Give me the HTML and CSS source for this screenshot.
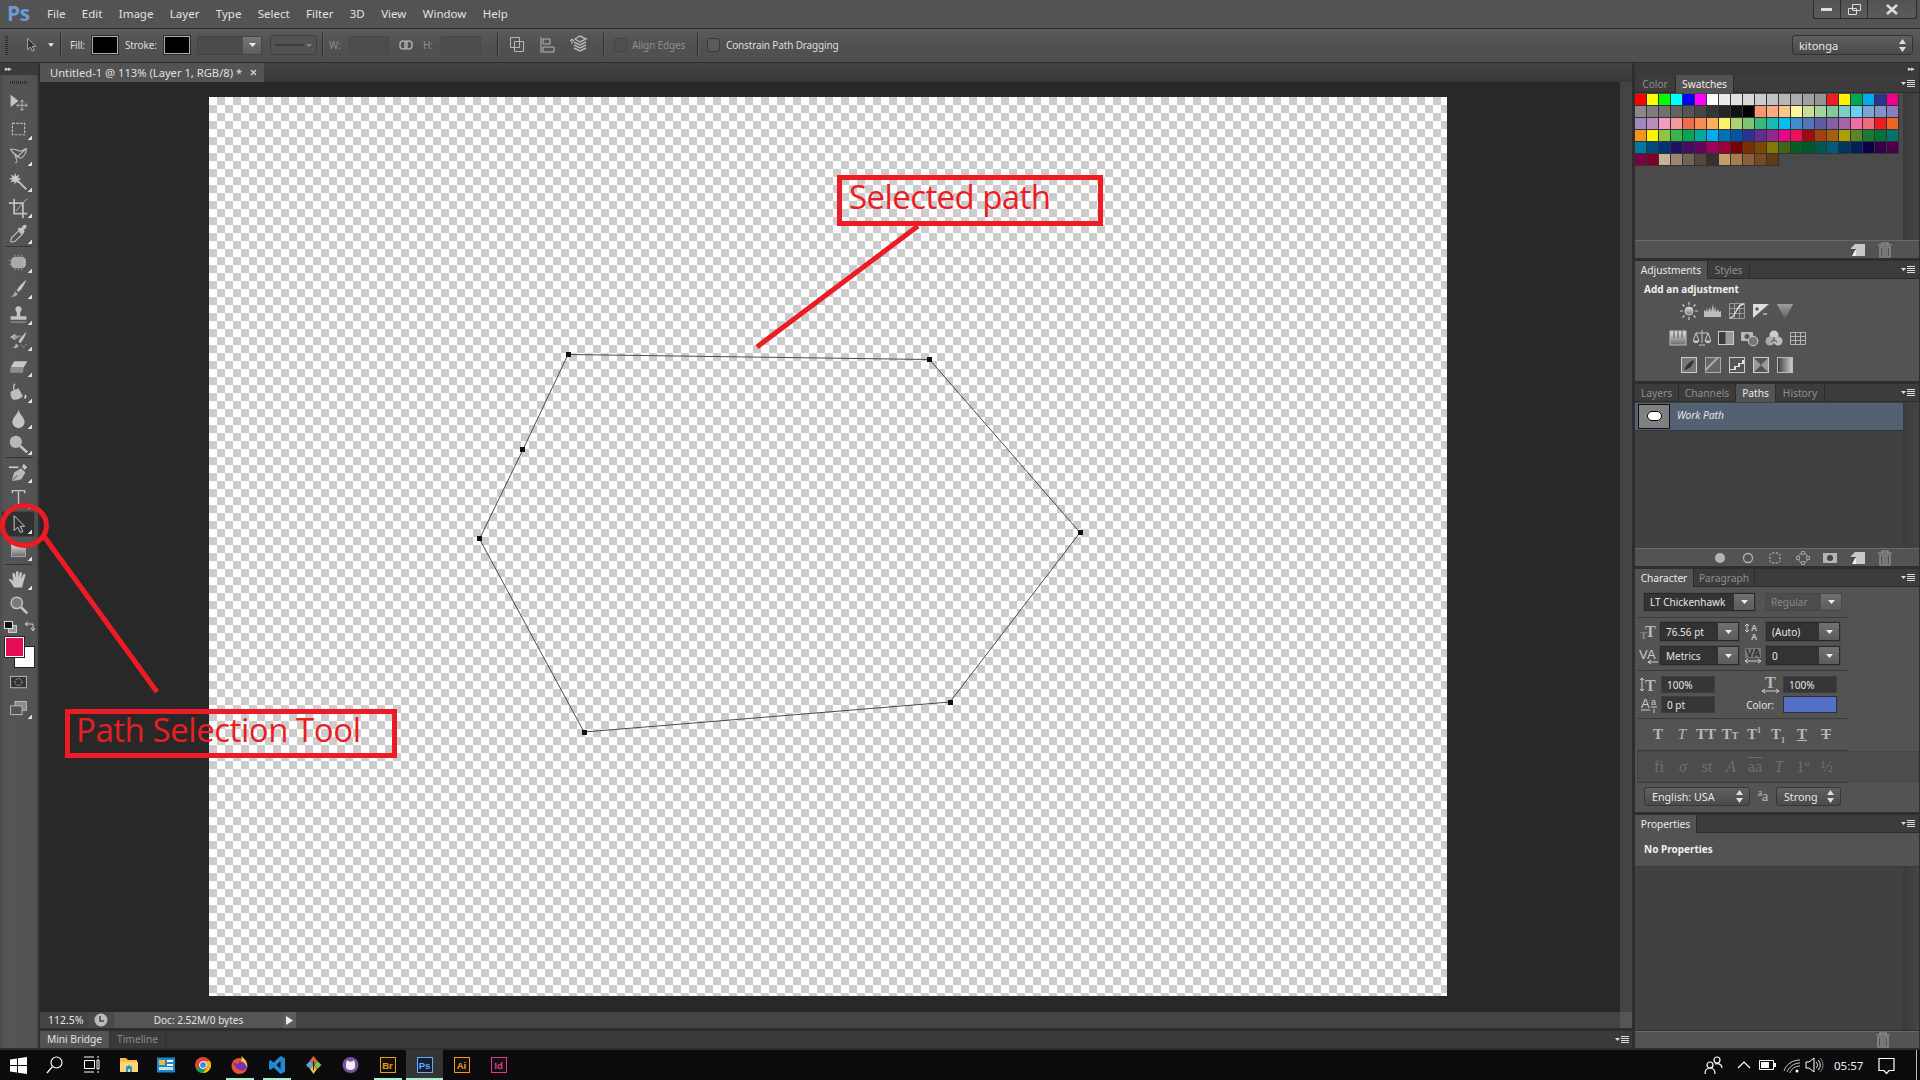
FILE: index.html
```html
<!DOCTYPE html>
<html lang="en">
<head>
<meta charset="utf-8">
<title>Photoshop</title>
<link rel="stylesheet" href="styles.css">
</head>
<body>
<svg class="defs" width="0" height="0" aria-hidden="true">
<defs>
<linearGradient id="gv" x1="0" y1="0" x2="0" y2="1"><stop offset="0" stop-color="#e4e4e4"/><stop offset="1" stop-color="#6a6a6a"/></linearGradient>
<linearGradient id="gh" x1="0" y1="0" x2="1" y2="0"><stop offset="0" stop-color="#3c3c3c"/><stop offset="1" stop-color="#d0d0d0"/></linearGradient>
<symbol id="t-move" viewBox="0 0 24 24"><path d="M3 2v14l9-7z" fill="#c4c4c4"/><path d="M16 8v12M10 14h12M14 10l2-2 2 2M14 18l2 2 2-2M12 12l-2 2 2 2M20 12l2 2-2 2" fill="none" stroke="#c4c4c4"/></symbol>
<symbol id="t-marq" viewBox="0 0 24 24"><rect x="5" y="5" width="14" height="13" fill="none" stroke="#bcbcbc" stroke-width="1.4" stroke-dasharray="3 1.4"/></symbol>
<symbol id="t-lasso" viewBox="0 0 24 24"><path d="M3 5c6-1 9 2 11 2s4-2 7-3c0 5-3 9-6 11-4-1-9-5-12-10zM8 12l2 5c1 3-1 4-2 3M4 7l10 8M20 5L10 14" fill="none" stroke="#bcbcbc" stroke-width="1.2"/></symbol>
<symbol id="t-wand" viewBox="0 0 24 24"><path d="M8 2l1.5 4L13 4l-1.500 4 4 1-4 1.500L13 14l-4-1.500L8 16l-1-4-4 1 2-3-4-1 4-1.500L3 4l4 2z" fill="#c8c8c8"/><path d="M11 11l10 10" stroke="#c4c4c4" stroke-width="2"/></symbol>
<symbol id="t-crop" viewBox="0 0 24 24"><path d="M7 2v17h15M1 7h16v17" fill="none" stroke="#c0c0c0" stroke-width="2"/><path d="M9 16l9-10M17 7l5-5" stroke="#c4c4c4"/></symbol>
<symbol id="t-drop" viewBox="0 0 24 24"><path d="M4 22l-1-1 1-4 8-8 4 4-8 8z" fill="none" stroke="#c4c4c4" stroke-width="1.200"/><path d="M11 7l6 6 2-3-1-2 3-3c1-3-2-4-4-2l-2 3-2-1z" fill="#c4c4c4"/></symbol>
<symbol id="t-heal" viewBox="0 0 24 24"><rect x="4" y="6" width="16" height="12" rx="4" fill="#a8a8a8" stroke="#cfcfcf" stroke-dasharray="2 1"/><path d="M8 3v18M12 3v18M16 3v18M1 10h22M1 14h22" stroke="#c8c8c8" stroke-width=".7" stroke-dasharray="2 14"/></symbol>
<symbol id="t-brush" viewBox="0 0 24 24"><path d="M21 2c-4 3-9 8-11 12l2 2c4-3 7-9 9-14z" fill="#c4c4c4"/><path d="M2 21c3 0 4-1 6-6l3 3c-1 3-4 4-9 3z" fill="#a6a6a6"/></symbol>
<symbol id="t-stamp" viewBox="0 0 24 24"><circle cx="12" cy="6" r="3.500" fill="#c4c4c4"/><path d="M10 8h4v6h-4zM3 14h18v4H3z" fill="#c4c4c4"/><path d="M3 20h18v1.500H3z" fill="#8e8e8e"/></symbol>
<symbol id="t-hist" viewBox="0 0 24 24"><path d="M21 2c-3 3-7 7-9 11l2 2c3-3 6-8 7-13z" fill="#c4c4c4"/><path d="M4 20c3 0 4-1 5-5l3 3c-1 3-4 3-8 2z" fill="#b0b0b0"/><path d="M3 8l5-3v2h7M3 8l5 3V9h4" fill="#c4c4c4" stroke="#c4c4c4" stroke-width=".8"/><path d="M15 17l3 3 3-4" fill="none" stroke="#c4c4c4" stroke-dasharray="1 1"/></symbol>
<symbol id="t-erase" viewBox="0 0 24 24"><path d="M7 6h15l-4 7H3z" fill="#c8c8c8"/><path d="M3 13h15l-1 6H2z" fill="#8e8e8e"/></symbol>
<symbol id="t-bucket" viewBox="0 0 24 24"><path d="M3 11l9-4 5 9c-2 3-8 5-11 4-2-1-4-6-3-9z" fill="#bdbdbd"/><path d="M8 2c-2 2-2 7 0 9" fill="none" stroke="#c4c4c4" stroke-width="1.500"/><path d="M20 14c-1 2-2 3-1 5 2 1 3-3 1-5z" fill="#d0d0d0"/></symbol>
<symbol id="t-blur" viewBox="0 0 24 24"><path d="M12 2c-1 5-7 9-7 14a7 7 0 0 0 14 0c0-5-6-9-7-14z" fill="#c4c4c4"/></symbol>
<symbol id="t-lens" viewBox="0 0 24 24"><circle cx="9" cy="9" r="7" fill="#b8b8b8"/><path d="M14 14l8 7" stroke="#c4c4c4" stroke-width="3"/></symbol>
<symbol id="t-pen" viewBox="0 0 24 24"><path d="M1 5h11v2H1z" fill="#c4c4c4"/><path d="M4 22l3-10 8-5 5 5-5 8z" fill="#b8b8b8"/><path d="M16 5l2-3 4 4-3 3z" fill="#c4c4c4"/><path d="M4 22l7-7" stroke="#444"/></symbol>
<symbol id="t-text" viewBox="0 0 24 24"><path d="M5 6V3h14v3M12 3v18M9 21h6" fill="none" stroke="#c4c4c4" stroke-width="1.600"/></symbol>
<symbol id="t-arrow" viewBox="0 0 24 24"><path d="M7 2v17l4-4 3 6 3-1-3-6h5z" fill="#2f2f2f" stroke="#d0d0d0" stroke-width="1.100"/></symbol>
<symbol id="t-shape" viewBox="0 0 24 24"><rect x="4" y="4" width="16" height="15" fill="url(#gv)" stroke="#aaa"/></symbol>
<symbol id="t-hand" viewBox="0 0 24 24"><path d="M7 21c-2-3-5-7-6-9 1-2 3 0 5 2L5 6c0-2 2-2 3 0l1 4V4c0-2 3-2 3 0v6l1-5c1-2 3-1 3 0l-1 6 2-4c1-2 3-1 3 0l-3 10-1 4z" fill="#c4c4c4"/></symbol>
<symbol id="t-zoom" viewBox="0 0 24 24"><circle cx="10" cy="9" r="6.500" fill="#7a7a7a" stroke="#c4c4c4" stroke-width="1.600"/><path d="M15 14l7 7" stroke="#c4c4c4" stroke-width="3"/></symbol>
<symbol id="t-mask" viewBox="0 0 24 24"><rect x="3" y="5" width="18" height="13" fill="#333" stroke="#c4c4c4"/><circle cx="12" cy="11.500" r="4" fill="none" stroke="#ddd" stroke-dasharray="1.500 1.500"/></symbol>
<symbol id="t-screen" viewBox="0 0 24 24"><rect x="8" y="4" width="13" height="10" fill="#8a8a8a" stroke="#c4c4c4"/><rect x="3" y="9" width="13" height="10" fill="#555" stroke="#c4c4c4"/></symbol>

<symbol id="a-sun" viewBox="0 0 18 18"><circle cx="9" cy="9" r="4" fill="url(#gv)" stroke="#ccc"/><path d="M9 0v3M9 15v3M0 9h3M15 9h3M2.500 2.500l2 2M13.500 13.500l2 2M15.500 2.500l-2 2M4.500 13.500l-2 2" stroke="#ccc" stroke-width="1.200"/></symbol>
<symbol id="a-lev" viewBox="0 0 18 18"><path d="M0 15V9l1-1 1 2 1-4 1 4 2-5 1 5 2-8 1 8 1-6 1 6 2-3 1 3 2-1v6z" fill="#bdbdbd"/></symbol>
<symbol id="a-cur" viewBox="0 0 18 18"><path d="M1.500 1.500h15v15h-15zM1.500 6.500h15M1.500 11.500h15M6.500 1.500v15M11.500 1.500v15" fill="none" stroke="#9c9c9c"/><path d="M2 16c6 0 6-14 14-14" fill="none" stroke="#e0e0e0" stroke-width="1.300"/></symbol>
<symbol id="a-exp" viewBox="0 0 18 18"><rect x="1" y="2" width="16" height="14" fill="#ddd"/><path d="M1 16L17 2v14z" fill="#555"/><path d="M3 7h4M5 5v4" stroke="#333"/><path d="M11 12h4" stroke="#eee"/></symbol>
<symbol id="a-vib" viewBox="0 0 18 18"><path d="M1 2h16l-8 15z" fill="url(#gv)"/><path d="M1 2h16l-8 15z" fill="#555" opacity=".5"/></symbol>
<symbol id="a-hue" viewBox="0 0 18 18"><rect x="1" y="2" width="16" height="14" fill="url(#gv)" stroke="#bbb"/><path d="M5 2v7M9 2v7M13 2v7" stroke="#555"/></symbol>
<symbol id="a-bal" viewBox="0 0 18 18"><path d="M9 1v13M3 4h12M6 16h6" stroke="#c8c8c8" fill="none"/><path d="M3 4l-3 8h6zM15 4l-3 8h6z" fill="none" stroke="#c8c8c8"/><path d="M0 12c1 3 5 3 6 0zM12 12c1 3 5 3 6 0z" fill="#c8c8c8"/></symbol>
<symbol id="a-bw" viewBox="0 0 18 18"><rect x="1.500" y="2.500" width="15" height="13" fill="#999" stroke="#ccc"/><rect x="2" y="3" width="6.500" height="12" fill="#3d3d3d"/></symbol>
<symbol id="a-cam" viewBox="0 0 18 18"><rect x="0" y="3" width="12" height="9" rx="1" fill="#b8b8b8"/><circle cx="6" cy="7.500" r="2.500" fill="#555"/><circle cx="12" cy="12" r="4.800" fill="#777" stroke="#ccc"/></symbol>
<symbol id="a-mix" viewBox="0 0 18 18"><circle cx="9" cy="6" r="4.500" fill="#ccc"/><circle cx="5" cy="12" r="4.500" fill="#aaa"/><circle cx="13" cy="12" r="4.500" fill="#bbb"/><path d="M9 8v3M6 13l3-2 3 2" stroke="#444" fill="none"/></symbol>
<symbol id="a-grid" viewBox="0 0 18 18"><path d="M1.500 3.500h15v12h-15zM1.500 7.500h15M1.500 11.500h15M6.500 3.500v12M11.500 3.500v12" fill="none" stroke="#b4b4b4"/></symbol>
<symbol id="a-inv" viewBox="0 0 18 18"><rect x="1.500" y="1.500" width="15" height="15" fill="#777" stroke="#ccc"/><path d="M4 14c2-5 5-8 10-10-1 5-4 9-10 10z" fill="#333"/></symbol>
<symbol id="a-pos" viewBox="0 0 18 18"><rect x="1.500" y="1.500" width="15" height="15" fill="#666" stroke="#aaa"/><path d="M2 12L12 2h3L2 15z" fill="#aaa"/></symbol>
<symbol id="a-thr" viewBox="0 0 18 18"><rect x="1.500" y="1.500" width="15" height="15" fill="#555" stroke="#ccc"/><path d="M2 13h4v-3h4V7h4V4h2v4h-4v3H8v3H2z" fill="#e0e0e0"/></symbol>
<symbol id="a-sel" viewBox="0 0 18 18"><rect x="1.500" y="1.500" width="15" height="15" fill="#999" stroke="#ccc"/><path d="M2 2h14L9 9zM2 16h14L9 9z" fill="#555"/></symbol>
<symbol id="a-grd" viewBox="0 0 18 18"><rect x="1.500" y="1.500" width="15" height="15" fill="url(#gh)" stroke="#bbb"/></symbol>

<symbol id="p-new" viewBox="0 0 16 16"><path d="M5 2h10v12H1V6z" fill="#c8c8c8"/><path d="M1 7h5v7H1z" fill="#4a4a4a"/><path d="M5 8h1v6H2z" fill="#eee"/></symbol>
<symbol id="p-trash" viewBox="0 0 16 16"><path d="M1 3h14M5 3V1h6v2" fill="none" stroke="#9c9c9c" stroke-width="1.200"/><path d="M3 5h10v10H3z" fill="none" stroke="#9c9c9c" stroke-width="1.200"/><path d="M6 6v8M8 6v8M10 6v8" stroke="#9c9c9c"/></symbol>
<symbol id="menu" viewBox="0 0 14 8"><path d="M0 2h5L2.500 5z" fill="#ddd"/><path d="M6 .5h8M6 2.500h8M6 4.500h8M6 6.500h8" stroke="#ddd"/></symbol>
<symbol id="caret" viewBox="0 0 7 4"><path d="M0 0h7L3.500 4z" fill="#eee"/></symbol>
<symbol id="updn" viewBox="0 0 7 13"><path d="M3.500 0L7 5H0zM0 8h7l-3.500 5z" fill="#ddd"/></symbol>
</defs>
</svg>

<div class="app">
  <header class="menubar">
    <span class="pslogo">Ps</span>
    <nav class="menus"><span>File</span><span>Edit</span><span>Image</span><span>Layer</span><span>Type</span><span>Select</span><span>Filter</span><span>3D</span><span>View</span><span>Window</span><span>Help</span></nav>
    <div class="winctl">
      <span class="wb w27"><svg width="12" height="4"><rect width="11" height="3" y="1" fill="#ddd"/></svg></span>
      <span class="wb w27"><svg width="13" height="11"><path d="M4.500.5h8v6h-8zM.5 4.500h8v6h-8z" fill="#535353" stroke="#ddd"/></svg></span>
      <span class="wb w48"><svg width="12" height="11"><path d="M1 1l10 9M11 1L1 10" stroke="#ddd" stroke-width="2.500"/></svg></span>
    </div>
  </header>

  <div class="optbar">
    <span class="grip"></span>
    <svg class="ob-arrow" width="16" height="20"><use href="#t-arrow"/></svg>
    <svg class="ob-caret" width="6" height="4"><use href="#caret"/></svg>
    <span class="osep s1"></span>
    <span class="olbl o-fill">Fill:</span>
    <span class="oswatch"></span>
    <span class="olbl o-stroke">Stroke:</span>
    <span class="oswatch"></span>
    <span class="odrop"><span class="odrop-b"><svg width="7" height="4"><use href="#caret"/></svg></span></span>
    <span class="ostyle"><i></i><svg width="6" height="3"><path d="M0 0h6L3 3z" fill="#888"/></svg></span>
    <span class="osep s2"></span>
    <span class="olbl dim o-w">W:</span>
    <span class="oinput"></span>
    <svg class="ob-link" width="14" height="10"><rect x="1" y="1" width="7" height="8" rx="3" fill="none" stroke="#aaa" stroke-width="1.500"/><rect x="6" y="1" width="7" height="8" rx="3" fill="none" stroke="#aaa" stroke-width="1.500"/></svg>
    <span class="olbl dim o-h">H:</span>
    <span class="oinput"></span>
    <span class="osep s3"></span>
    <svg class="ob-i1" width="18" height="18"><path d="M1.500 1.500h9v10h-9zM5.500 5.500h9v10h-9z" fill="none" stroke="#b8b8b8"/></svg>
    <svg class="ob-i2" width="16" height="18"><path d="M1 1v16M3 3h7v5H3zM3 11h11v5H3z" fill="none" stroke="#b8b8b8"/></svg>
    <svg class="ob-i3" width="18" height="20"><path d="M10 1l6 3-6 3-5-3zM4 7l6 3 6-3M4 10l6 3 6-3M4 13l6 3 6-3" fill="none" stroke="#b8b8b8" stroke-width="1.400"/><path d="M2 4v5M0 6l2-2 2 2" fill="none" stroke="#ccc"/></svg>
    <span class="osep s4"></span>
    <span class="ocheck c1"></span>
    <span class="olbl dim o-align">Align Edges</span>
    <span class="osep s5"></span>
    <span class="ocheck c2"></span>
    <span class="olbl o-constrain">Constrain Path Dragging</span>
    <span class="oworkspace"><b>kitonga</b><svg width="7" height="13"><use href="#updn"/></svg></span>
  </div>

  <div class="main">
    <aside class="leftcol">
      <div class="strip">&#9656;&#9656;</div>
      <div class="toolgrip"></div>
      <div class="tool"><svg><use href="#t-move"/></svg></div>
      <div class="tool more"><svg><use href="#t-marq"/></svg></div>
      <div class="tool more"><svg><use href="#t-lasso"/></svg></div>
      <div class="tool more"><svg><use href="#t-wand"/></svg></div>
      <div class="tool more"><svg><use href="#t-crop"/></svg></div>
      <div class="tool more"><svg><use href="#t-drop"/></svg></div>
      <div class="tsep s1"></div>
      <div class="tool more"><svg><use href="#t-heal"/></svg></div>
      <div class="tool more"><svg><use href="#t-brush"/></svg></div>
      <div class="tool more"><svg><use href="#t-stamp"/></svg></div>
      <div class="tool more"><svg><use href="#t-hist"/></svg></div>
      <div class="tool more"><svg><use href="#t-erase"/></svg></div>
      <div class="tool more"><svg><use href="#t-bucket"/></svg></div>
      <div class="tool more"><svg><use href="#t-blur"/></svg></div>
      <div class="tool more"><svg><use href="#t-lens"/></svg></div>
      <div class="tsep"></div>
      <div class="tool more"><svg><use href="#t-pen"/></svg></div>
      <div class="tool more"><svg><use href="#t-text"/></svg></div>
      <div class="tool more on"><svg><use href="#t-arrow"/></svg></div>
      <div class="tool more"><svg><use href="#t-shape"/></svg></div>
      <div class="tsep s2"></div>
      <div class="tool more"><svg><use href="#t-hand"/></svg></div>
      <div class="tool"><svg><use href="#t-zoom"/></svg></div>
      <div class="defaults">
        <svg width="14" height="12"><rect x="4.500" y="4.500" width="8" height="7" fill="#999" stroke="#ccc"/><rect x=".5" y=".5" width="8" height="7" fill="#111" stroke="#ddd"/></svg>
        <svg width="12" height="12"><path d="M1 3h8v6M1 3l3-2M1 3l3 2M9 10l-2-3M9 10l2-3" fill="none" stroke="#ccc"/></svg>
      </div>
      <div class="fgbg"><span class="bg"></span><span class="fg"></span></div>
      <div class="tool q"><svg><use href="#t-mask"/></svg></div>
      <div class="tool more"><svg><use href="#t-screen"/></svg></div>
    </aside>

    <section class="center">
      <div class="doctabs"><div class="doctab"><span>Untitled-1 @ 113% (Layer 1, RGB/8) *</span><svg width="7" height="7"><path d="M1 1l5 5M6 1L1 6" stroke="#ccc" stroke-width="1.500"/></svg></div></div>
      <div class="work">
        <div class="stage"><div class="canvas"></div></div>
        <div class="vscroll"></div>
      </div>
      <div class="status">
        <span class="zoomv">112.5%</span>
        <span class="stico"><svg width="14" height="14"><circle cx="7" cy="7" r="6.500" fill="#bbb"/><path d="M6 3v5h4" fill="none" stroke="#444" stroke-width="1.500"/></svg></span>
        <span class="docinfo">Doc: 2.52M/0 bytes</span>
        <span class="starrow"><svg width="7" height="9"><path d="M0 0l7 4.500L0 9z" fill="#eee"/></svg></span>
        <span class="stcorner"></span>
      </div>
      <div class="bottomtabs">
        <span class="btab on">Mini Bridge</span><span class="btab">Timeline</span>
        <svg class="btmenu" width="14" height="8"><use href="#menu"/></svg>
      </div>
    </section>

    <aside class="dock">
      <div class="dockhead">&#9656;&#9656;</div>

      <div class="panel">
        <div class="ptabs"><span class="ptab w-color">Color</span><span class="ptab on w-swat">Swatches</span><svg class="pmenu" width="14" height="8"><use href="#menu"/></svg></div>
        <div class="pbody h-swat">
          <div class="swgrid">
<i style="background:#ff0000"></i><i style="background:#ffff00"></i><i style="background:#00ff00"></i><i style="background:#00ffff"></i><i style="background:#0000ff"></i><i style="background:#ff00ff"></i><i style="background:#ffffff"></i><i style="background:#ebebeb"></i><i style="background:#e1e1e1"></i><i style="background:#d7d7d7"></i><i style="background:#cccccc"></i><i style="background:#c2c2c2"></i><i style="background:#b7b7b7"></i><i style="background:#acacac"></i><i style="background:#a0a0a0"></i><i style="background:#959595"></i><i style="background:#ee1d24"></i><i style="background:#fff100"></i><i style="background:#00a650"></i><i style="background:#00aeef"></i><i style="background:#2f3192"></i><i style="background:#ed008c"></i>
<i style="background:#898989"></i><i style="background:#7d7d7d"></i><i style="background:#707070"></i><i style="background:#626262"></i><i style="background:#555555"></i><i style="background:#464646"></i><i style="background:#363636"></i><i style="background:#262626"></i><i style="background:#111111"></i><i style="background:#000000"></i><i style="background:#f7977a"></i><i style="background:#fbad82"></i><i style="background:#fdc68c"></i><i style="background:#fff799"></i><i style="background:#c6df9c"></i><i style="background:#a4d49d"></i><i style="background:#81ca9d"></i><i style="background:#7bcdc9"></i><i style="background:#6ccff7"></i><i style="background:#7ca6d8"></i><i style="background:#8293ca"></i><i style="background:#8881be"></i>
<i style="background:#a286bd"></i><i style="background:#bc8cbf"></i><i style="background:#f49bc1"></i><i style="background:#f5999d"></i><i style="background:#f16c4d"></i><i style="background:#f68e54"></i><i style="background:#fbaf5a"></i><i style="background:#fff467"></i><i style="background:#acd372"></i><i style="background:#7dc473"></i><i style="background:#39b778"></i><i style="background:#16bcb4"></i><i style="background:#00bff3"></i><i style="background:#438ccb"></i><i style="background:#5573b7"></i><i style="background:#5e5ca7"></i><i style="background:#855fa8"></i><i style="background:#a763a9"></i><i style="background:#ef6ea8"></i><i style="background:#f16d7e"></i><i style="background:#ee1d24"></i><i style="background:#f16522"></i>
<i style="background:#f7941d"></i><i style="background:#fff100"></i><i style="background:#8fc63d"></i><i style="background:#37b44a"></i><i style="background:#00a650"></i><i style="background:#00a99e"></i><i style="background:#00aeef"></i><i style="background:#0072bc"></i><i style="background:#0054a5"></i><i style="background:#2f3192"></i><i style="background:#652c91"></i><i style="background:#91278f"></i><i style="background:#ed008c"></i><i style="background:#ee105a"></i><i style="background:#9d0a0f"></i><i style="background:#a1410d"></i><i style="background:#a36209"></i><i style="background:#aba000"></i><i style="background:#588528"></i><i style="background:#197b30"></i><i style="background:#007236"></i><i style="background:#00736a"></i>
<i style="background:#0076a4"></i><i style="background:#004a80"></i><i style="background:#003370"></i><i style="background:#1d1363"></i><i style="background:#450e61"></i><i style="background:#62055f"></i><i style="background:#9e005c"></i><i style="background:#9d0039"></i><i style="background:#790000"></i><i style="background:#7b3000"></i><i style="background:#7c4900"></i><i style="background:#827a00"></i><i style="background:#3e6617"></i><i style="background:#045f20"></i><i style="background:#005824"></i><i style="background:#005951"></i><i style="background:#005b7e"></i><i style="background:#003562"></i><i style="background:#002056"></i><i style="background:#0c004b"></i><i style="background:#30004a"></i><i style="background:#4b0048"></i>
<i style="background:#7a0045"></i><i style="background:#7a0026"></i><i style="background:#c7b198"></i><i style="background:#998675"></i><i style="background:#736357"></i><i style="background:#534741"></i><i style="background:#362f2d"></i><i style="background:#c69c6e"></i><i style="background:#a77c50"></i><i style="background:#8b5e3c"></i><i style="background:#744b24"></i><i style="background:#623a17"></i>
          </div>
          <div class="pscroll"></div>
        </div>
        <div class="pfoot"><span class="fi"><svg width="16" height="16"><use href="#p-new"/></svg></span><span class="fi"><svg width="16" height="16"><use href="#p-trash"/></svg></span></div>
      </div>

      <div class="panel">
        <div class="ptabs"><span class="ptab on w-adj">Adjustments</span><span class="ptab w-sty">Styles</span><svg class="pmenu" width="14" height="8"><use href="#menu"/></svg></div>
        <div class="adjbody">
          <div class="adjtitle">Add an adjustment</div>
          <div class="adjrow r1"><svg><use href="#a-sun"/></svg><svg><use href="#a-lev"/></svg><svg><use href="#a-cur"/></svg><svg><use href="#a-exp"/></svg><svg><use href="#a-vib"/></svg></div>
          <div class="adjrow r2"><svg><use href="#a-hue"/></svg><svg><use href="#a-bal"/></svg><svg><use href="#a-bw"/></svg><svg><use href="#a-cam"/></svg><svg><use href="#a-mix"/></svg><svg><use href="#a-grid"/></svg></div>
          <div class="adjrow r1"><svg><use href="#a-inv"/></svg><svg><use href="#a-pos"/></svg><svg><use href="#a-thr"/></svg><svg><use href="#a-sel"/></svg><svg><use href="#a-grd"/></svg></div>
        </div>
      </div>

      <div class="panel">
        <div class="ptabs"><span class="ptab w-lay">Layers</span><span class="ptab w-cha">Channels</span><span class="ptab on w-pat">Paths</span><span class="ptab w-his">History</span><svg class="pmenu" width="14" height="8"><use href="#menu"/></svg></div>
        <div class="pbody h-paths">
          <div class="plist">
            <div class="pathrow"><span class="thumb"><i></i></span><em>Work Path</em></div>
          </div>
          <div class="pscroll"></div>
        </div>
        <div class="pfoot">
          <span class="fi"><svg width="16" height="16"><circle cx="8" cy="8" r="5" fill="#b4b4b4"/></svg></span>
          <span class="fi"><svg width="16" height="16"><circle cx="8" cy="8" r="4.500" fill="none" stroke="#b4b4b4" stroke-width="1.300"/></svg></span>
          <span class="fi"><svg width="16" height="16"><rect x="3" y="3" width="10" height="10" rx="2.500" fill="none" stroke="#ccc" stroke-dasharray="2 1.500"/></svg></span>
          <span class="fi"><svg width="16" height="16"><circle cx="8" cy="8" r="5" fill="none" stroke="#a0a0a0"/><path d="M6.500 1.500h3v3h-3zM6.500 11.500h3v3h-3zM1.500 6.500h3v3h-3zM11.500 6.500h3v3h-3z" fill="#555" stroke="#a0a0a0"/></svg></span>
          <span class="fi"><svg width="16" height="16"><rect x="1" y="3" width="14" height="10" fill="#b4b4b4"/><circle cx="8" cy="8" r="3" fill="#444"/></svg></span>
          <span class="fi"><svg width="16" height="16"><use href="#p-new"/></svg></span>
          <span class="fi"><svg width="16" height="16"><use href="#p-trash"/></svg></span>
        </div>
      </div>

      <div class="panel">
        <div class="ptabs"><span class="ptab on w-chr">Character</span><span class="ptab w-par">Paragraph</span><svg class="pmenu" width="14" height="8"><use href="#menu"/></svg></div>
        <div class="charbody">
          <div class="crow c-font">
            <span class="fld dark w111"><span class="fv">LT Chickenhawk</span><span class="fb"><svg width="7" height="4"><use href="#caret"/></svg></span></span>
            <span class="fld off w77"><span class="fv">Regular</span><span class="fb"><svg width="7" height="4"><use href="#caret"/></svg></span></span>
          </div>
          <div class="csep m1"></div>
          <div class="crow c-size">
            <span class="cic w23"><svg width="18" height="16"><text x="0" y="15" class="gs sm">T</text><text x="5" y="13" class="gs">T</text></svg></span>
            <span class="fld dark w79"><span class="fv">76.56 pt</span><span class="fb"><svg width="7" height="4"><use href="#caret"/></svg></span></span>
            <span class="cic w27"><svg width="16" height="19"><path d="M2 3v6M0 4l2-2 2 2M0 8l2 2 2-2" fill="none" stroke="#ccc"/><text x="6" y="9" class="ga">A</text><text x="6" y="18" class="ga">A</text></svg></span>
            <span class="fld dark w74"><span class="fv">(Auto)</span><span class="fb"><svg width="7" height="4"><use href="#caret"/></svg></span></span>
          </div>
          <div class="crow c-size2">
            <span class="cic w23"><svg width="18" height="16"><text x="-1" y="11" class="gv">V</text><text x="7" y="11" class="gv">A</text><path d="M8 14h10M8 14l3-2M8 14l3 2" fill="none" stroke="#ccc"/></svg></span>
            <span class="fld dark w79"><span class="fv">Metrics</span><span class="fb"><svg width="7" height="4"><use href="#caret"/></svg></span></span>
            <span class="cic w27"><svg width="18" height="16"><rect x="1" y="0" width="16" height="10" fill="#777"/><text x="2" y="9" class="gb">VA</text><path d="M1 13h16M1 13l3-2M1 13l3 2M17 13l-3-2M17 13l-3 2" fill="none" stroke="#ccc"/></svg></span>
            <span class="fld dark w74"><span class="fv">0</span><span class="fb"><svg width="7" height="4"><use href="#caret"/></svg></span></span>
          </div>
          <div class="csep m2"></div>
          <div class="crow c-scale">
            <span class="cic w24"><svg width="18" height="16"><path d="M2 1v13M0 3l2-2 2 2M0 12l2 2 2-2" fill="none" stroke="#ccc"/><text x="5" y="14" class="gs">T</text></svg></span>
            <span class="fld flat w54"><span class="fv">100%</span></span>
            <span class="cic w68 right"><svg width="19" height="17"><text x="4" y="12" class="gs">T</text><path d="M1 15h17M1 15l3-2M1 15l3 2M18 15l-3-2M18 15l-3 2" fill="none" stroke="#ccc"/></svg></span>
            <span class="fld flat w54"><span class="fv">100%</span></span>
          </div>
          <div class="crow c-base">
            <span class="cic w24"><svg width="18" height="16"><text x="1" y="11" class="gb2">A</text><text x="11" y="8" class="gsm">a</text><path d="M1 13h9M11 10h6M14 16v-4" fill="none" stroke="#ccc"/></svg></span>
            <span class="fld flat w54"><span class="fv">0 pt</span></span>
            <span class="clabel">Color:</span>
            <span class="colorchip"></span>
          </div>
          <div class="csep m3"></div>
          <div class="glyphs on"><span class="b">T</span><span class="i">T</span><span class="b">TT</span><span class="b">T<small>T</small></span><span class="b">T<sup>1</sup></span><span class="b">T<sub>1</sub></span><span class="b u">T</span><span class="b s">T</span></div>
          <div class="csep m4"></div>
          <div class="glyphs off"><span>fi</span><span class="i">&#963;</span><span>st</span><span class="i">A</span><span class="o">aa</span><span class="i">T</span><span>1<sup>st</sup></span><span>&#189;</span></div>
          <div class="csep m4"></div>
          <div class="crow c-lang">
            <span class="sel w106"><b>English: USA</b><svg width="7" height="13"><use href="#updn"/></svg></span>
            <span class="aa"><sup>a</sup>a</span>
            <span class="sel w65"><b>Strong</b><svg width="7" height="13"><use href="#updn"/></svg></span>
          </div>
        </div>
      </div>

      <div class="panel grow">
        <div class="ptabs"><span class="ptab on w-pro">Properties</span><svg class="pmenu" width="14" height="8"><use href="#menu"/></svg></div>
        <div class="prophead">No Properties</div>
        <div class="pbody h-prop"><div class="plist"></div><div class="pscroll"></div></div>
        <div class="pfoot bare"><span class="fi"><svg width="16" height="16"><use href="#p-trash"/></svg></span></div>
      </div>
    </aside>
  </div>

  <footer class="taskbar">
    <span class="ti first"><svg width="17" height="17"><path d="M0 2.500l7-1v6.500H0zM8 1.300L17 0v8H8zM0 9h7v6.500l-7-1zM8 9h9v8l-9-1.300z" fill="#fff"/></svg></span>
    <span class="ti"><svg width="17" height="18"><circle cx="10.500" cy="6.500" r="5.500" fill="none" stroke="#fff" stroke-width="1.200"/><path d="M6.500 10.500L1 17" stroke="#fff" stroke-width="1.200"/></svg></span>
    <span class="ti"><svg width="17" height="18"><path d="M1.500 4.500h10v8h-10z" fill="none" stroke="#fff"/><path d="M1 1h10M1 16h10M14 1h2M14 4h2v9h-2zM14 16h2" fill="none" stroke="#fff"/></svg></span>
    <span class="ti"><svg width="18" height="16"><path d="M0 1h6l2 2h9v12H0z" fill="#f3c041"/><path d="M0 5h18v10H0z" fill="#fbd672"/><path d="M6 15v-5l3-2 3 2v5h-2v-3H8v3z" fill="#2b8fd8"/></svg></span>
    <span class="ti"><svg width="18" height="16"><rect width="18" height="15" y=".5" fill="#1e88c7"/><rect x="2" y="3" width="6" height="5" fill="#f2b544"/><rect x="10" y="3" width="6" height="2" fill="#fff"/><rect x="10" y="7" width="6" height="2" fill="#fff"/><rect x="2" y="10" width="14" height="3" fill="#bfe2f5"/></svg></span>
    <span class="ti"><svg width="16" height="16"><circle cx="8" cy="8" r="8" fill="#db4437"/><path d="M8 8L1 12a8 8 0 0 0 7 4l4-2z" fill="#0f9d58"/><path d="M8 4h7a8 8 0 0 1-7 12l4-6z" fill="#f4b400"/><circle cx="8" cy="8" r="3.500" fill="#4285f4" stroke="#fff"/></svg></span>
    <span class="ti run"><svg width="17" height="18"><circle cx="8.500" cy="10" r="8" fill="#e8542c"/><path d="M2 6c2 8 10 11 14 6 1-4-1-8-3-9 1 3-1 4-3 3-2-1-3 0-2 2-2 0-4-1-6-2z" fill="#7a2fb6"/><path d="M10 0c3 2 7 6 6 12-1-4-3-6-6-7 1-2 1-3 0-5z" fill="#ffca3a"/></svg></span>
    <span class="ti run"><svg width="16" height="18"><path d="M11.500 0L16 2.200v13.600L11.500 18 4.500 11.500 1.500 14 0 13V5l1.500-1 3 2.500zm0 5l-4 4 4 4z" fill="#1f8ad2"/></svg></span>
    <span class="ti"><svg width="17" height="18"><path d="M8.500 0l4 5-4 4-4-4z" fill="#e5603a"/><path d="M1 9l4-4 3.500 4-3.500 4z" fill="#5aa7e0"/><path d="M12.500 5L16.500 9l-4 4L9 9z" fill="#7ec24a"/><path d="M5 13l3.500-4 3.500 4-3.500 5z" fill="#f3c33b"/><path d="M8.500 5v9" stroke="#222"/></svg></span>
    <span class="ti"><svg width="17" height="18"><circle cx="8.500" cy="9" r="8" fill="#7d4fa3"/><path d="M4 7l1-3 2 1.500h3L12 4l1 3v4c0 2-2 3-4.500 3S4 13 4 11z" fill="#eee"/></svg></span>
    <span class="ti run"><span class="adobe br">Br</span></span>
    <span class="ti active"><span class="adobe ps">Ps</span></span>
    <span class="ti"><span class="adobe ai">Ai</span></span>
    <span class="ti"><span class="adobe id">Id</span></span>
    <div class="tray">
      <svg class="y-people" width="20" height="20"><circle cx="13" cy="5" r="3" fill="none" stroke="#fff" stroke-width="1.200"/><circle cx="6" cy="10" r="3" fill="none" stroke="#fff" stroke-width="1.200"/><path d="M1 19c0-4 2-6 5-6s5 2 5 6M11 9c3-1 7 0 7 4" fill="none" stroke="#fff" stroke-width="1.200"/></svg>
      <svg class="y-chev" width="20" height="20"><path d="M4 13l6-6 6 6" fill="none" stroke="#fff" stroke-width="1.200"/></svg>
      <svg class="y-bat" width="20" height="20"><path d="M1.500 5.500h14v9h-14z" fill="none" stroke="#fff"/><rect x="3" y="7" width="8" height="6" fill="#fff"/><rect x="16" y="8" width="2" height="4" fill="#fff"/></svg>
      <svg class="y-wifi" width="20" height="20"><path d="M1 16C3 9 10 5 17 5M4 17C6 12 11 8 17 8M7 18c1-4 5-7 10-7" fill="none" stroke="#ccc"/><circle cx="14" cy="16" r="1.500" fill="#fff"/></svg>
      <svg class="y-vol" width="20" height="20"><path d="M1 7h3l5-4v14l-5-4H1z" fill="none" stroke="#fff"/><path d="M11 7c2 2 2 4 0 6M13 5c3 3 3 7 0 10" fill="none" stroke="#fff"/><path d="M15 3c4 4 4 10 0 14" fill="none" stroke="#888"/></svg>
      <span class="y-time">05:57</span>
      <svg class="y-note" width="20" height="20"><path d="M2 3.500h15v12h-5l-2.500 3-2.500-3H2z" fill="none" stroke="#fff" stroke-width="1.200"/></svg>
      <span class="y-line"></span>
    </div>
  </footer>
</div>

<svg class="annot" width="1920" height="1080" viewBox="0 0 1920 1080">
  <path class="wp" d="M568 354.500L929.500 359.500 1080 532.600 950 702 584 732 479.500 539 523 449.500z"/>
  <g class="nodes"><rect x="566" y="352" width="5" height="5"/><rect x="927" y="357" width="5" height="5"/><rect x="1078" y="530" width="5" height="5"/><rect x="948" y="700" width="5" height="5"/><rect x="582" y="730" width="5" height="5"/><rect x="477" y="536" width="5" height="5"/><rect x="520" y="447" width="5" height="5"/></g>
  <g class="red">
    <rect x="839.500" y="177.500" width="261" height="46"/>
    <path d="M918 226L757 347"/>
    <rect x="67.500" y="711.500" width="327" height="44"/>
    <path d="M157 692L43 535"/>
    <ellipse cx="24.500" cy="525.500" rx="22" ry="20"/>
  </g>
  <text class="anno" x="849" y="209" textLength="202">Selected path</text>
  <text class="anno" x="76" y="742" textLength="285">Path Selection Tool</text>
</svg>
</body>
</html>
```

FILE: styles.css
```css
*{box-sizing:border-box}
html,body{margin:0;padding:0;width:1920px;height:1080px;overflow:hidden;background:#2b2b2b}
body{font:11px "Noto Sans","Open Sans",sans-serif;color:#dcdcdc;position:relative}
.defs{display:block;height:0}
.app{width:1920px;height:1080px;display:flex;flex-direction:column}
svg{display:block;flex:none}

/* title + menu */
.menubar{height:29px;background:#535353;border-bottom:1px solid #2c2c2c;display:flex;align-items:flex-start;flex:none}
.pslogo{font:700 21px/27px "Open Sans",sans-serif;color:#6a9bd3;margin-left:7px;width:40px;letter-spacing:-.5px}
.menus{display:flex;gap:16.400px;height:27px;align-items:center;font-size:11.500px;color:#e2e2e2}
.winctl{margin-left:auto;margin-right:3px;display:flex;height:19px;border:1px solid #2c2c2c;border-top:0;border-radius:0 0 3px 3px;background:linear-gradient(#525252,#5c5c5c)}
.wb{display:flex;align-items:center;justify-content:center;border-right:1px solid #2c2c2c}
.wb:last-child{border-right:0}
.w27{width:27px}.w48{width:48px}

/* options bar */
.optbar{height:34px;flex:none;display:flex;align-items:center;padding-bottom:1px;background:linear-gradient(#5a5a5a,#515151 50%,#4f4f4f);border-bottom:1px solid #2c2c2c;color:#dedede}
.grip{margin-left:5px;width:3px;height:19px;background:repeating-linear-gradient(#2f2f2f 0 1px,transparent 1px 2px)}
.ob-arrow{margin-left:15px}
.ob-caret{margin-left:9px}
.osep{width:1px;height:24px;background:#2e2e2e;box-shadow:1px 0 0 #5f5f5f}
.s1{margin-left:6px}.s2{margin-left:5px}.s3{margin-left:16px}.s4{margin-left:15px}.s5{margin-left:11px}
.olbl{font-size:10px;letter-spacing:-.15px;white-space:nowrap}
.dim{color:#8e8e8e}
.o-fill{margin-left:9px;width:22px}
.oswatch{width:26px;height:18px;background:#000;border:1px solid #ababab;box-shadow:0 0 0 1px #2e2e2e}
.o-stroke{margin-left:7px;width:39px}
.odrop{margin-left:7px;width:65px;height:19px;background:#4b4b4b;border:1px solid #444;border-radius:2px;display:flex;justify-content:flex-end}
.odrop-b{width:18px;background:linear-gradient(#777,#5d5d5d);display:flex;align-items:center;justify-content:center}
.ostyle{margin-left:8px;width:47px;height:20px;background:#525252;border:1px solid #3f3f3f;border-radius:3px;display:flex;align-items:center;padding:0 4px;gap:2px}
.ostyle i{flex:1;height:2px;background:#3a3a3a}
.o-w{margin-left:6px;width:20px}
.oinput{width:40px;height:19px;background:#4c4c4c;border:1px solid #484848}
.ob-link{margin-left:10px}
.o-h{margin-left:10px;width:18px}
.ob-i1{margin-left:11px}.ob-i2{margin-left:13px}.ob-i3{margin-left:14px}
.ocheck{width:13px;height:14px;background:#5b5b5b;border:1px solid #3a3a3a;border-radius:3px}
.c1{margin-left:10px;background:#4f4f4f;border-color:#454545}
.c2{margin-left:9px}
.o-align{margin-left:5px;width:54px}
.o-constrain{margin-left:6px;width:112px}
.oworkspace{margin-left:auto;margin-right:7px;width:121px;height:20px;border:1px solid #333;border-radius:3px;background:linear-gradient(#5f5f5f,#4a4a4a);display:flex;align-items:center;justify-content:space-between;padding:0 6px}
.oworkspace b{font-weight:400;font-size:11px;color:#e6e6e6}

.main{height:987px;flex:none;display:flex;background:#2e2e2e}

/* left tool column */
.leftcol{width:39px;flex:none;height:985px;background:linear-gradient(90deg,#4a4a4a,#555 10%,#535353 90%,#4a4a4a);border-right:1px solid #2e2e2e;display:flex;flex-direction:column}
.strip{height:12px;background:#3a3a3a;font-size:7px;line-height:12px;padding-left:5px;color:#ddd;letter-spacing:-1px;flex:none}
.toolgrip{height:15px;margin:0 10px;background:repeating-linear-gradient(90deg,#2f2f2f 0 1px,transparent 1px 2px) center/100% 3px no-repeat;flex:none}
.tool{height:26px;flex:none;display:flex;align-items:center;justify-content:center;margin:0 4px 0 2px}
.tool svg{width:21px;height:21px}
.tool.more{background:linear-gradient(135deg,transparent 50%,#ddd 50%) no-repeat right 2px bottom 2px/4px 4px}
.tool.on{background-color:#303030;border-radius:2px;height:24px;margin-top:1px;margin-bottom:1px;box-shadow:0 0 0 1px #454545}
.tsep{height:1px;background:#363636;margin:0 5px 1px;flex:none}
.tsep.s1{margin-bottom:2px}
.tsep.s2{margin:1px 5px 1px}
.defaults{height:18px;display:flex;align-items:center;gap:6px;padding-left:4px;flex:none}
.fgbg{height:30px;flex:none;position:relative;margin-top:1px}
.fgbg .fg{position:absolute;left:5px;top:0;width:19px;height:20px;background:#e50d56;border:1px solid #fff;outline:1px solid #222}
.fgbg .bg{position:absolute;left:15px;top:10px;width:19px;height:20px;background:#fff;border:1px solid #fff;outline:1px solid #222}
.q{margin-top:2px}

/* centre */
.center{width:1592px;margin-left:1px;flex:none;display:flex;flex-direction:column;height:985px}
.doctabs{height:19px;flex:none;background:linear-gradient(#434343,#383838)}
.doctab{width:224px;height:19px;background:#535353;display:flex;align-items:center;justify-content:space-between;padding:0 7px 0 10px;font-size:11.200px;color:#e0e0e0;white-space:nowrap}
.work{height:930px;flex:none;display:flex}
.stage{width:1580px;flex:none;background:#282828;padding:15px 0 0 169px}
.canvas{width:1238px;height:899px;background:#fff conic-gradient(#ccc 25%,#fff 0 50%,#ccc 0 75%,#fff 0) 0 0/16px 16px}
.vscroll{width:12px;background:#444}
.status{height:16px;flex:none;background:#444;display:flex;align-items:center;font-size:10px;color:#e4e4e4}
.zoomv{width:49px;padding-left:8px;background:#444;font-size:10.500px}
.stico{width:24px;height:16px;background:#4a4a4a;display:flex;align-items:center;justify-content:center}
.docinfo{width:170px;height:16px;line-height:16px;text-align:center;background:#555;border-left:1px solid #444}
.starrow{width:13px;height:16px;background:#5d5d5d;display:flex;align-items:center;justify-content:center}
.stcorner{margin-left:auto;width:12px;height:16px;background:#555}
.bottomtabs{margin-top:3px;height:17px;flex:none;background:#3a3a3a;display:flex;align-items:stretch;font-size:10.200px}
.btab{color:#8a8a8a;width:56px;text-align:center;line-height:17px;border-right:1px solid #303030}
.btab.on{width:70px;background:#535353;color:#e4e4e4}
.btmenu{margin:5px 3px 0 auto}

/* dock */
.dock{margin-left:3px;width:284px;flex:none;display:flex;flex-direction:column;gap:3px;height:985px}
.dockhead{height:12px;margin-bottom:-3px;background:#3a3a3a;color:#ddd;font-size:7px;line-height:12px;text-align:right;padding-right:5px;letter-spacing:-1px;flex:none}
.panel{display:flex;flex-direction:column;flex:none}
.panel.grow{flex:1}
.ptabs{height:18px;flex:none;display:flex;background:#3c3c3c;border-bottom:1px solid #2c2c2c;font-size:10.200px;align-items:stretch}
.ptab{color:#8f8f8f;display:flex;align-items:center;justify-content:center;border-right:1px solid #2c2c2c;height:18px}
.ptab.on{background:#535353;color:#ececec}
.pmenu{margin:5px 4px 0 auto}
.w-color{width:41px}.w-swat{width:58px}.w-adj{width:73px}.w-sty{width:42px}.w-lay{width:44px}.w-cha{width:57px}.w-pat{width:40px}.w-his{width:49px}.w-chr{width:59px}.w-par{width:61px}.w-pro{width:62px}
.pbody{display:flex;background:#414141}
.plist{flex:1}
.pscroll{width:16px;flex:none;background:linear-gradient(90deg,#3a3a3a,#444)}
.h-swat{height:147px;background:#4a4a4a;justify-content:space-between}
.swgrid{width:265px;display:grid;grid-template-columns:repeat(22,12px);grid-auto-rows:12px;align-content:start;padding-top:1px}
.swgrid i{display:block;border-right:1px solid #333;border-bottom:1px solid #333}
.pfoot{height:18px;flex:none;background:#535353;border-top:1px solid #6a6a6a;display:flex;justify-content:flex-end;align-items:center;padding-right:20px}
.fi{width:27.500px;display:flex;justify-content:center}
.h-paths{height:146px}
.adjbody{height:102px;background:#535353;flex:none}
.adjtitle{height:18px;line-height:20px;padding-left:9px;font-weight:700;font-size:10px;color:#f0f0f0}
.adjrow{height:27px;display:flex;align-items:center}
.adjrow svg{width:18px;height:18px;margin:0 3px}
.r1{padding-left:42px}.r2{padding-left:31px}
.pathrow{height:28px;margin-top:1px;background:#536173;display:flex;align-items:center;padding-left:3px;border-bottom:1px solid #2e3640;font-size:10.200px;color:#e6e6e6}
.pathrow em{margin:0 0 3px 7px}
.thumb{width:32px;height:25px;margin-bottom:1px;background:#808080;border:1px solid #111;display:flex;align-items:center;justify-content:center}
.thumb i{display:block;width:15px;height:10px;background:#fff;border:1px solid #000;border-radius:5px}

/* character */
.charbody{height:225px;background:#535353;padding:6px 0 0 2px;flex:none}
.crow{display:flex;align-items:center}
.c-font{padding-left:7px;gap:10px;height:18px}
.c-size,.c-size2{height:19px}
.c-size2{margin-top:5px}
.c-scale{height:17px;margin-top:0}
.c-base{height:17px;margin-top:3px}
.c-lang{padding-left:7px;height:19px;margin-top:4px}
.csep{width:211px;height:1px;background:#3a3a3a}
.m1{margin:6px 0 4px}.m2{margin:5px 0 5px}.m3{margin:5px 0 0}
.m4{margin:0}
.fld{height:100%;display:flex;align-items:center;font-size:10px;color:#e6e6e6;flex:none}
.fv{flex:1;padding-left:5px;white-space:nowrap;overflow:hidden}
.dark{background:#333;border:1px solid #2a2a2a;box-shadow:0 0 0 1px #4a4a4a}
.off{background:#4c4c4c;border:1px solid #474747;color:#888}
.flat{background:#363636;border:1px solid #3f3f3f}
.fb{width:20px;height:100%;background:linear-gradient(#707070,#5c5c5c);display:flex;align-items:center;justify-content:center}
.w111{width:111px}.w77{width:77px}.w79{width:79px}.w74{width:74px}.w54{width:54px}
.cic{height:100%;display:flex;align-items:center;justify-content:center;flex:none}
.cic svg{overflow:visible}
.w23{width:23px}.w24{width:24px}.w68{width:68px}
.cic.right{justify-content:flex-end;padding-right:3px}
.gs{font:700 16px "Liberation Serif",serif;fill:#b8b8b8}
.gs.sm{font-size:11px;fill:#888}
.ga{font:700 8.500px "Liberation Sans",sans-serif;fill:#c8c8c8}
.gv{font:400 13px "Liberation Sans",sans-serif;fill:#ccc}
.gb{font:700 11px "Liberation Sans",sans-serif;fill:#2f2f2f}
.gb2{font:400 13px "Liberation Sans",sans-serif;fill:#ccc}
.gsm{font:400 9px "Liberation Sans",sans-serif;fill:#ccc}
.clabel{width:68px;text-align:right;padding-right:9px;font-size:10px;color:#e0e0e0}
.colorchip{width:54px;height:17px;background:#5570c8;border:1px solid #2e2e2e}
.glyphs{display:flex;padding-left:9px;height:31px;align-items:center;font-family:"Liberation Serif",serif;font-size:15px}
.glyphs span{width:24px;text-align:center;white-space:nowrap}
.glyphs.on{color:#b9b9b9}
.glyphs.off{color:#6f6f6f;font-size:16px}
.glyphs .b{font-weight:700}
.glyphs .i{font-style:italic}
.glyphs .u{text-decoration:underline}
.glyphs .s{text-decoration:line-through}
.glyphs .o{text-decoration:overline}
.glyphs small{font-size:10px}
.glyphs sup,.glyphs sub{font-size:8px;line-height:0}
.sel{height:100%;flex:none;display:flex;align-items:center;justify-content:space-between;padding:0 6px 0 7px;background:linear-gradient(#606060,#4a4a4a);border:1px solid #373737;border-radius:3px;font-size:10.700px;color:#e6e6e6}
.sel b{font-weight:400;white-space:nowrap}
.w106{width:106px}.w65{width:65px}
.aa{width:26px;text-align:center;color:#bcbcbc;font:14px/1 "Liberation Serif",serif}
.aa sup{font-size:10px;line-height:0;vertical-align:5px}
.prophead{height:34px;flex:none;background:#535353;line-height:33px;padding-left:9px;font-weight:700;font-size:10px;color:#f0f0f0;border-bottom:1px solid #3a3a3a}
.h-prop{height:163px}
.pfoot.bare{height:17px;margin-top:1px;padding-right:22px}

/* taskbar */
.taskbar{height:30px;flex:none;background:#0b0b0d;display:flex;align-items:stretch}
.ti{width:37px;display:flex;align-items:center;justify-content:center;flex:none}
.ti.first{width:36px}
.run{background:linear-gradient(#a9f0cf,#a9f0cf) no-repeat center bottom/28px 2px}
.ti.active{background:#343434;border-bottom:2px solid #a9f0cf;padding-top:2px}
.adobe{width:16px;height:16px;display:flex;align-items:center;justify-content:center;font:700 9.500px "Liberation Sans",sans-serif;border:1px solid;background:#111}
.br{color:#e7a10b;border-color:#e7a10b}
.ps{color:#6fa8f0;border-color:#6fa8f0;background:#10203a}
.ai{color:#f09a2a;border-color:#f09a2a}
.id{color:#e6388c;border-color:#e6388c}
.tray{margin-left:auto;display:flex;align-items:center;padding-right:3px}
.y-chev{margin-left:10px}.y-bat{margin-left:4px}.y-wifi{margin-left:5px}.y-vol{margin-left:2px}
.y-time{margin-left:9px;width:27px;font:11.500px "Noto Sans",sans-serif;color:#eee}
.y-note{margin-left:16px}
.y-line{margin-left:19px;width:1px;height:30px;background:#bbb}

/* annotations laid over the screenshot */
.annot{position:absolute;left:0;top:0;pointer-events:none}
.wp{fill:none;stroke:#4a4a4a;stroke-width:1}
.nodes rect{fill:#111}
.red rect,.red path,.red ellipse{fill:none;stroke:#ed1c24;stroke-width:5}
.anno{font:33px "Open Sans",sans-serif;fill:#ed1c24}
```
